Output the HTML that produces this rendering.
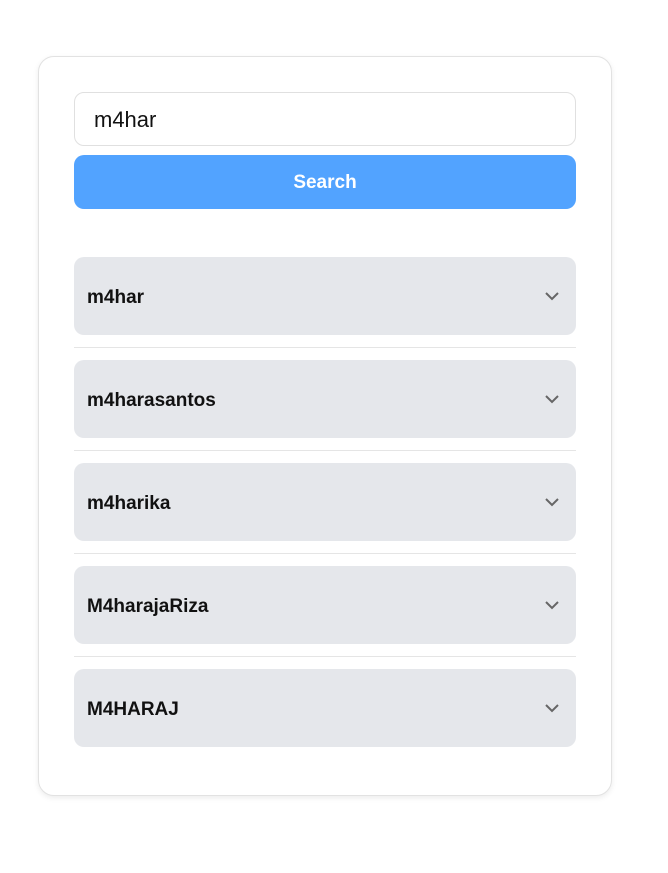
<!DOCTYPE html>
<html><head><style>
*{box-sizing:border-box;margin:0;padding:0}
body{width:668px;height:873px;background:#fff;font-family:"Liberation Sans",sans-serif;position:relative}
.card{position:absolute;left:38px;top:56px;width:574px;height:740px;border:1px solid #e2e2e2;border-radius:16px;box-shadow:0 2px 6px rgba(0,0,0,.08);background:#fff}
.inp{position:absolute;left:35px;top:35px;width:502px;height:54px;border:1px solid #e0e0e0;border-radius:10px;font-size:22px;line-height:54px;padding-left:19px;color:#111}
.btn{position:absolute;left:35px;top:98px;width:502px;height:54px;background:#52a3ff;border-radius:10px;color:#fff;font-weight:bold;font-size:19px;text-align:center;line-height:56px}
.item{position:absolute;left:35px;width:502px;height:78px;background:#e5e7eb;border-radius:10px;font-weight:bold;font-size:19px;line-height:82px;padding-left:13px;color:#111}
.item svg{position:absolute;right:16px;top:34px}
.sep{position:absolute;left:35px;width:502px;height:1px;background:#e5e5e5}
</style></head><body>
<div class="card">
<div class="inp">m4har</div>
<div class="btn">Search</div>
<div class="item" style="top:200px">m4har<svg width="16" height="10" viewBox="0 0 16 10"><path d="M2 2l6 6 6-6" fill="none" stroke="#666" stroke-width="2"/></svg></div>
<div class="sep" style="top:290px"></div>
<div class="item" style="top:303px">m4harasantos<svg width="16" height="10" viewBox="0 0 16 10"><path d="M2 2l6 6 6-6" fill="none" stroke="#666" stroke-width="2"/></svg></div>
<div class="sep" style="top:393px"></div>
<div class="item" style="top:406px">m4harika<svg width="16" height="10" viewBox="0 0 16 10"><path d="M2 2l6 6 6-6" fill="none" stroke="#666" stroke-width="2"/></svg></div>
<div class="sep" style="top:496px"></div>
<div class="item" style="top:509px">M4harajaRiza<svg width="16" height="10" viewBox="0 0 16 10"><path d="M2 2l6 6 6-6" fill="none" stroke="#666" stroke-width="2"/></svg></div>
<div class="sep" style="top:599px"></div>
<div class="item" style="top:612px">M4HARAJ<svg width="16" height="10" viewBox="0 0 16 10"><path d="M2 2l6 6 6-6" fill="none" stroke="#666" stroke-width="2"/></svg></div>
</div>
</body></html>
